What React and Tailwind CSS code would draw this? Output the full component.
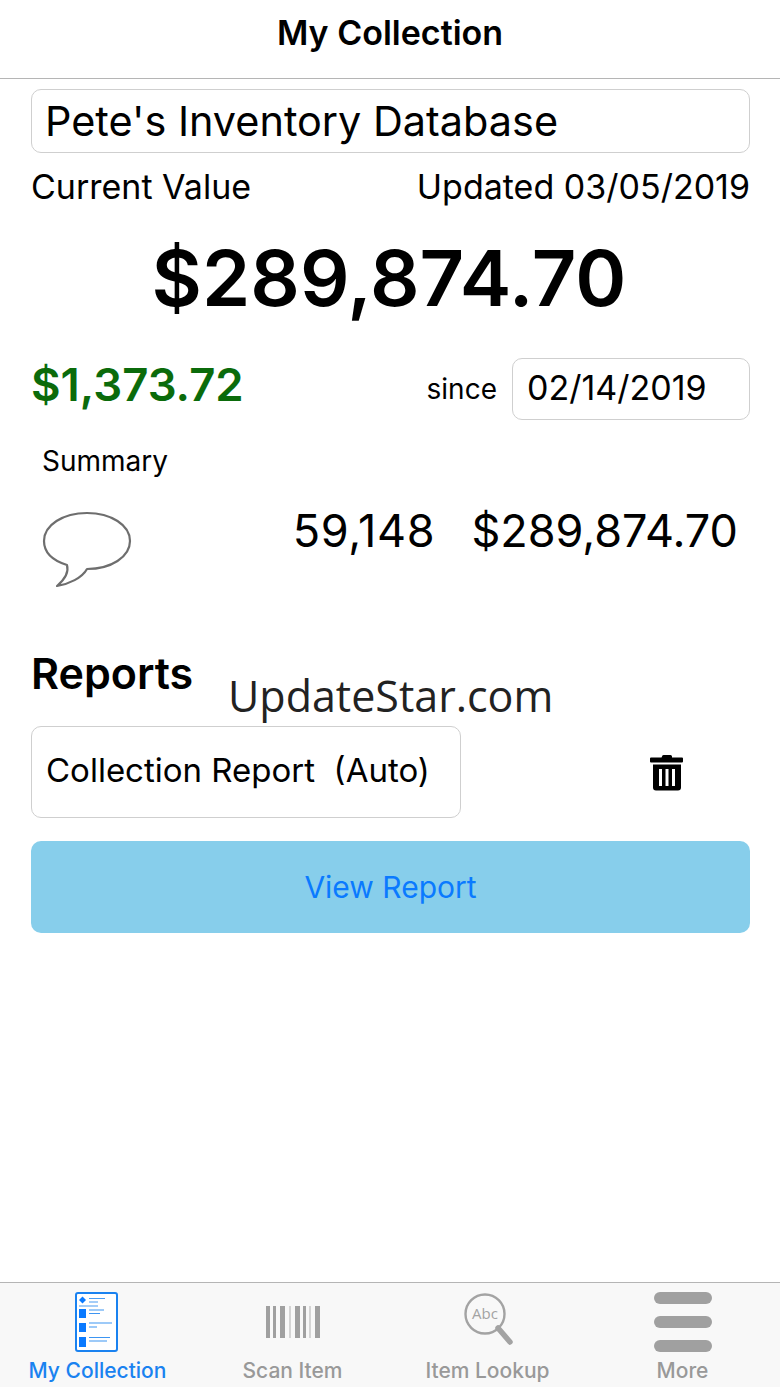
import React from "react";

const font = { fontFamily: "Inter" };

function CollectionIcon() {
    return (
        <svg width="44" height="60" viewBox="0 0 44 60" fill="none" className="-ml-[1px]">
            <rect x="1" y="1" width="41" height="58" rx="2" fill="#fff" stroke="#1a82f0" strokeWidth="2" />
            <path d="M7.500 4.500l3.500 3.500-3.500 3.500-3.500-3.500z" fill="#0a7aff" />
            <path d="M14 6.500h16M14 10h9M4 14h19" stroke="#4a9cf2" strokeWidth="1.200" />
            <rect x="4" y="17" width="7" height="9" fill="#0a7aff" />
            <rect x="4" y="31" width="7" height="9" fill="#0a7aff" />
            <rect x="4" y="45" width="7" height="10" fill="#0a7aff" />
            <path d="M14 18h15M14 21.500h11M14 31h23M14 35h8M14 45.500h21M14 49h18" stroke="#3d95f2" strokeWidth="1.200" />
        </svg>
    );
}

function BarcodeIcon() {
    return (
        <svg width="56" height="32" viewBox="0 0 56 32" fill="#a0a0a0" className="ml-[1px]">
            <rect x="1" width="4" height="32" />
            <rect x="8" width="3" height="32" />
            <rect x="15" width="5" height="32" />
            <rect x="24" width="2" height="32" fill="#d4d4d4" />
            <rect x="30" width="5" height="32" />
            <rect x="38" width="3" height="32" />
            <rect x="44" width="2" height="32" fill="#d4d4d4" />
            <rect x="50" width="5" height="32" />
        </svg>
    );
}

function LookupIcon() {
    return (
        <svg width="52" height="60" viewBox="0 0 52 60" fill="none">
            <circle cx="23" cy="22" r="19.500" stroke="#a3a3a3" strokeWidth="2.400" />
            <path d="M36 36l12 14" stroke="#a3a3a3" strokeWidth="5.500" strokeLinecap="round" />
            <text x="23" y="27" textAnchor="middle" fontSize="15" fill="#a3a3a3" fontFamily="Open Sans">Abc</text>
        </svg>
    );
}

function MoreIcon() {
    return (
        <div className="flex flex-col gap-[12px]">
            <div className="h-[12px] w-[58px] rounded-full bg-[#a0a0a0]" />
            <div className="h-[12px] w-[58px] rounded-full bg-[#a0a0a0]" />
            <div className="h-[12px] w-[58px] rounded-full bg-[#a0a0a0]" />
        </div>
    );
}

function TrashIcon() {
    return (
        <svg width="34" height="38" viewBox="0 0 34 38" fill="#000">
            <path d="M12 3.500q0-1.500 1.500-1.500h7q1.500 0 1.500 1.500v1h10q1 0 1 1v3q0 1-1 1h-31q-1 0-1-1v-3q0-1 1-1h10.500z" />
            <path fillRule="evenodd" d="M3 11.500h28v23q0 3-3 3h-22q-3 0-3-3zM9 16v17h3v-17zM15.500 16v17h3v-17zM22 16v17h3v-17z" />
        </svg>
    );
}

function BubbleIcon() {
    return (
        <svg width="92" height="80" viewBox="0 0 92 80" fill="none">
            <path
                d="M26 57C10 52 3 43 3 33C3 17 22 5 46 5C70 5 89 17 89 33C89 49 70 61 46 61C41 70 28 76 16 78C23 72 28 64 26 57z"
                stroke="#6e6e6e"
                strokeWidth="2.200"
                strokeLinejoin="round"
            />
        </svg>
    );
}

function Tab({ icon, label, active, iconClass }) {
    return (
        <div className="flex flex-1 flex-col items-center">
            <div className={`flex h-[60px] items-end justify-center ${iconClass}`}>{icon}</div>
            <div className={`mt-[7px] text-[21px] leading-[24px] font-medium ${active ? "text-[#1a82f0]" : "text-[#999]"}`}>
                {label}
            </div>
        </div>
    );
}

export default function App() {
    return (
        <div style={font} className="relative flex h-[1387px] w-[780px] flex-col overflow-hidden bg-white text-black">
            <header className="flex h-[79px] shrink-0 items-center justify-center border-b border-[#b5b5b5] pb-[14px] text-[34px] font-semibold">
                My Collection
            </header>

            <main className="flex-1 pt-[10px] pr-[30px] pl-[31px]">
                <div className="flex h-[64px] items-center rounded-[10px] border border-[#cfcfcf] px-[13px] text-[41.4px]">
                    Pete's Inventory Database
                </div>

                <div className="mt-[13px] flex items-center justify-between text-[34px] leading-[42px]">
                    <span>Current Value</span>
                    <span>Updated 03/05/2019</span>
                </div>

                <div className="mt-[23px] pr-[3px] text-center text-[77.5px] leading-[94px] font-semibold">$289,874.70</div>

                <div className="mt-[29px] flex items-center justify-between">
                    <span className="pb-[8px] text-[45.5px] leading-[62px] font-semibold text-[#0b6b0b]">$1,373.72</span>
                    <div className="flex items-center gap-[15px]">
                        <span className="text-[28px]">since</span>
                        <div className="flex h-[62px] w-[238px] items-center rounded-[10px] border border-[#cfcfcf] px-[14px] pb-[4px] text-[34px]">
                            02/14/2019
                        </div>
                    </div>
                </div>

                <div className="mt-[19px] pl-[11px] text-[28px] leading-[36px]">Summary</div>

                <div className="mt-[24px] flex items-start">
                    <div className="mt-[5px] ml-[10px] w-[92px]">
                        <BubbleIcon />
                    </div>
                    <div className="flex flex-1 justify-end gap-[36px] pr-[12px] text-[45px] leading-[56px]">
                        <span className="tracking-[0.7px]">59,148</span>
                        <span>$289,874.70</span>
                    </div>
                </div>

                <div className="mt-[60px] text-[43px] leading-[50px] font-semibold">Reports</div>

                <div className="mt-[28px] flex items-center">
                    <div className="flex h-[92px] w-[430px] items-center rounded-[10px] border border-[#cfcfcf] px-[14px] pb-[2px] text-[33px] whitespace-pre">
                        Collection Report  (Auto)
                    </div>
                    <div className="ml-[189px]">
                        <TrashIcon />
                    </div>
                </div>

                <div className="mt-[23px] flex h-[92px] items-center justify-center rounded-[10px] bg-[#87ceeb] text-[30px] text-[#0a7aff]">
                    View Report
                </div>
            </main>

            <nav className="flex h-[105px] shrink-0 items-start border-t border-[#b5b5b5] bg-[#f8f8f8] pt-[9px]">
                <Tab icon={<CollectionIcon />} label="My Collection" active />
                <Tab icon={<BarcodeIcon />} label="Scan Item" iconClass="pb-[14px]" />
                <Tab icon={<LookupIcon />} label="Item Lookup" />
                <Tab icon={<MoreIcon />} label="More" />
            </nav>

            <div className="absolute top-[668px] left-[228px] text-[43px] leading-[56px] text-[#222]" style={{ fontFamily: "Open Sans" }}>
                UpdateStar.com
            </div>
        </div>
    );
}
